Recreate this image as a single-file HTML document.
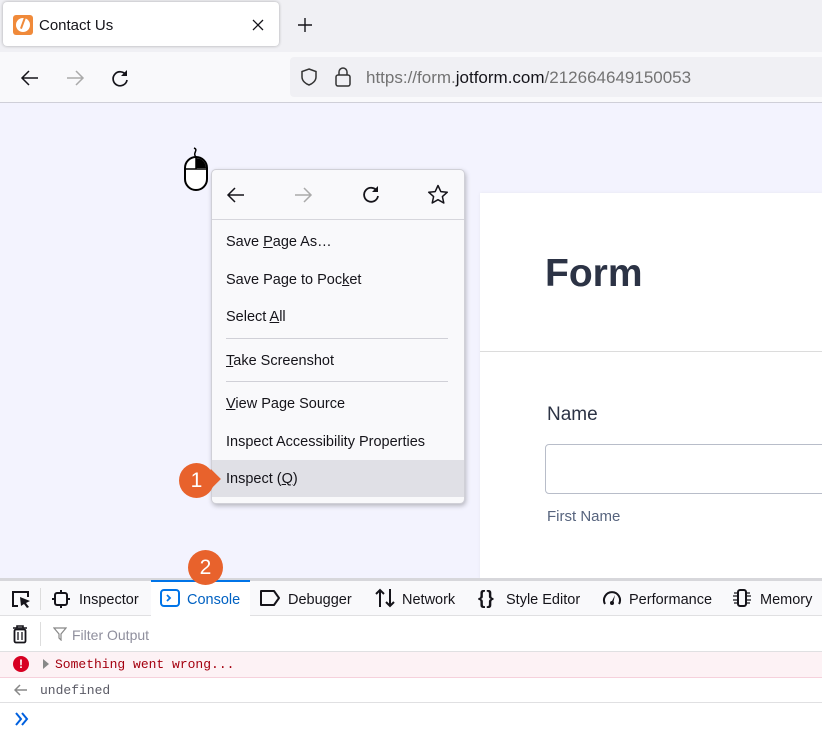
<!DOCTYPE html>
<html><head><meta charset="utf-8"><style>
*{box-sizing:border-box;margin:0;padding:0}
body{width:822px;height:748px;overflow:hidden;font-family:"Liberation Sans",sans-serif;background:#fff;position:relative;color:#15141a}
.a{position:absolute}
.t{position:absolute;white-space:nowrap}
.mi{position:absolute;left:226px;font-size:14.5px;color:#15141a;white-space:nowrap}
.tab{position:absolute;top:583px;height:35px;font-size:14.5px;color:#15141a;white-space:nowrap;line-height:35px}
</style></head><body>
<div class="a" style="left:0;top:0;width:822px;height:52px;background:#f0f0f4"></div>
<div class="a" style="left:3px;top:2px;width:276px;height:44px;background:#fff;border-radius:4px;box-shadow:0 0 3px rgba(0,0,0,.3)"></div>
<div class="a" style="left:13px;top:15px;width:20px;height:20px;background:#f08a3a;border-radius:3px"></div>
<div class="a" style="left:16px;top:18px;width:14px;height:14px;background:#fff;border-radius:50%"></div>
<div class="a" style="left:22px;top:17px;width:2px;height:12px;background:#f08a3a;transform:rotate(20deg)"></div>
<div class="t" style="left:39px;top:17px;font-size:15px">Contact Us</div>
<svg class="a" style="left:252px;top:19px" width="12" height="12"><path d="M1 1L11 11M11 1L1 11" stroke="#15141a" stroke-width="1.3"/></svg>
<svg class="a" style="left:297px;top:17px" width="16" height="16"><path d="M8 1V15M1 8H15" stroke="#15141a" stroke-width="1.4"/></svg>
<div class="a" style="left:0;top:52px;width:822px;height:51px;background:#f9f9fb;border-bottom:1px solid #cfcfd8"></div>
<svg class="a" style="left:20px;top:68px" width="20" height="20"><path d="M18 10H3M9 3L2 10L9 17" stroke="#15141a" stroke-width="1.5" fill="none"/></svg>
<svg class="a" style="left:65px;top:68px" width="20" height="20"><path d="M2 10H17M11 3L18 10L11 17" stroke="#aaa" stroke-width="1.5" fill="none"/></svg>
<svg class="a" style="left:110px;top:68px" width="20" height="20"><path d="M16 7A7 7 0 1 0 17 12" stroke="#15141a" stroke-width="1.7" fill="none"/><path d="M17 2V8H11Z" fill="#15141a"/></svg>
<div class="a" style="left:290px;top:57px;width:532px;height:40px;background:#f0f0f4;border-radius:4px 0 0 4px"></div>
<svg class="a" style="left:299px;top:67px" width="20" height="20"><path d="M10 2L17 4.5V10C17 14 13 17 10 18C7 17 3 14 3 10V4.5Z" stroke="#333" stroke-width="1.5" fill="none"/></svg>
<svg class="a" style="left:334px;top:66px" width="18" height="22"><rect x="2" y="9" width="14" height="11" rx="2" stroke="#333" stroke-width="1.5" fill="none"/><path d="M5 9V6A4 4 0 0 1 13 6V9" stroke="#333" stroke-width="1.5" fill="none"/></svg>
<div class="t" style="left:366px;top:68px;font-size:17px;color:#737373">https://form.<span style="color:#15141a">jotform.com</span>/212664649150053</div>
<div class="a" style="left:0;top:103px;width:822px;height:476px;background:#f3f3fe"></div>
<div class="a" style="left:480px;top:193px;width:342px;height:386px;background:#fff;box-shadow:0 0 3px rgba(0,0,0,.06)"></div>
<div class="a" style="left:480px;top:351px;width:342px;height:1px;background:#dcdcdc"></div>
<div class="t" style="left:545px;top:252px;font-size:39px;font-weight:bold;color:#2c3345">Form</div>
<div class="t" style="left:547px;top:404px;font-size:19px;color:#2c3345">Name</div>
<div class="a" style="left:545px;top:444px;width:290px;height:50px;border:1px solid #b8bdc9;border-radius:4px"></div>
<div class="t" style="left:547px;top:508px;font-size:15px;color:#57647e">First Name</div>
<svg class="a" style="left:183px;top:147px" width="28" height="46"><path d="M11 1C16 3 9 6 13 10" stroke="#000" stroke-width="1.5" fill="none"/><rect x="2" y="10" width="22" height="33" rx="11" stroke="#000" stroke-width="2" fill="#fff"/><path d="M2 22H24M13 10V22" stroke="#000" stroke-width="1.5"/><path d="M13 11A10 10 0 0 1 23 21H13Z" fill="#000"/></svg>
<div class="a" style="left:211px;top:169px;width:254px;height:335px;background:#f9f9fb;border:1px solid #d0d0d7;border-radius:5px;box-shadow:1px 2px 5px rgba(0,0,0,.25)"></div>
<div class="a" style="left:212px;top:219px;width:252px;height:1px;background:#d6d6dc"></div>
<svg class="a" style="left:226px;top:185px" width="20" height="20"><path d="M18 10H3M9 3L2 10L9 17" stroke="#15141a" stroke-width="1.5" fill="none"/></svg>
<svg class="a" style="left:293px;top:185px" width="20" height="20"><path d="M2 10H17M11 3L18 10L11 17" stroke="#aaa" stroke-width="1.5" fill="none"/></svg>
<svg class="a" style="left:361px;top:184px" width="20" height="20"><path d="M16 7A7 7 0 1 0 17 12" stroke="#15141a" stroke-width="1.8" fill="none"/><path d="M17 2V8H11Z" fill="#15141a"/></svg>
<svg class="a" style="left:427px;top:184px" width="22" height="22"><path d="M11 1.5L13.8 7.6L20.3 8.2L15.4 12.6L16.8 19L11 15.7L5.2 19L6.6 12.6L1.7 8.2L8.2 7.6Z" stroke="#15141a" stroke-width="1.5" fill="none" stroke-linejoin="round"/></svg>
<div class="mi" style="top:234px">Save <u>P</u>age As…</div>
<div class="mi" style="top:272px">Save Page to Poc<u>k</u>et</div>
<div class="mi" style="top:309px">Select <u>A</u>ll</div>
<div class="a" style="left:226px;top:338px;width:222px;height:1px;background:#d0d0d7"></div>
<div class="mi" style="top:353px"><u>T</u>ake Screenshot</div>
<div class="a" style="left:226px;top:381px;width:222px;height:1px;background:#d0d0d7"></div>
<div class="mi" style="top:396px"><u>V</u>iew Page Source</div>
<div class="mi" style="top:434px">Inspect Accessibility Properties</div>
<div class="a" style="left:212px;top:460px;width:252px;height:37px;background:#e0e0e6"></div>
<div class="mi" style="top:471px">Inspect (<u>Q</u>)</div>
<div class="a" style="left:204px;top:472px;width:14px;height:14px;background:#e8622c;transform:rotate(45deg)"></div>
<div class="a" style="left:179px;top:463px;width:35px;height:35px;border-radius:50%;background:#e8622c;color:#fff;font-size:21px;text-align:center;line-height:35px">1</div>
<div class="a" style="left:0;top:578px;width:822px;height:3px;background:#d7d7db"></div>
<div class="a" style="left:0;top:581px;width:822px;height:35px;background:#f9f9fb;border-bottom:1px solid #e0e0e2"></div>
<div class="a" style="left:151px;top:580px;width:99px;height:2px;background:#0074e8"></div>
<div class="a" style="left:151px;top:582px;width:99px;height:34px;background:#fff"></div>
<div class="a" style="left:199px;top:570px;width:12px;height:12px;background:#e8622c;transform:rotate(45deg)"></div>
<div class="a" style="left:188px;top:550px;width:35px;height:35px;border-radius:50%;background:#e8622c;color:#fff;font-size:21px;text-align:center;line-height:35px">2</div>
<svg class="a" style="left:10px;top:589px" width="22" height="20"><path d="M8 17H3V3H18V8" stroke="#15141a" stroke-width="2" fill="none"/><path d="M10 8L20 12L16 14L19 18L17 19L14 15L11 17Z" fill="#15141a"/></svg>
<div class="a" style="left:40px;top:588px;width:1px;height:22px;background:#ddd"></div>
<svg class="a" style="left:51px;top:589px" width="20" height="20"><rect x="4" y="4" width="12" height="12" rx="2" stroke="#15141a" stroke-width="2" fill="none"/><path d="M10 1V4M10 16V19M1 10H4M16 10H19" stroke="#15141a" stroke-width="2"/></svg>
<div class="tab" style="left:79px">Inspector</div>
<svg class="a" style="left:160px;top:589px" width="20" height="18"><rect x="1" y="1" width="18" height="16" rx="3" stroke="#0074e8" stroke-width="2" fill="none"/><path d="M7 6L10 9L7 12" stroke="#0074e8" stroke-width="1.8" fill="none"/></svg>
<div class="tab" style="left:187px;color:#0061c2">Console</div>
<svg class="a" style="left:259px;top:589px" width="22" height="18"><path d="M2 2H15L20 9L15 16H2Z" stroke="#15141a" stroke-width="2" fill="none" stroke-linejoin="round"/></svg>
<div class="tab" style="left:288px">Debugger</div>
<svg class="a" style="left:374px;top:588px" width="22" height="20"><path d="M6 19V2M2 6L6 2L10 6M16 1V18M12 14L16 18L20 14" stroke="#15141a" stroke-width="2" fill="none"/></svg>
<div class="tab" style="left:402px">Network</div>
<div class="tab" style="left:478px;font-weight:bold;font-size:19px;top:581px;letter-spacing:1px">{}</div>
<div class="tab" style="left:506px">Style Editor</div>
<svg class="a" style="left:602px;top:588px" width="20" height="20"><path d="M3 16A8 8 0 1 1 17 16" stroke="#15141a" stroke-width="2" fill="none"/><path d="M9 15L13 7L11 16Z" fill="#15141a"/><circle cx="10" cy="15" r="2" fill="#15141a"/></svg>
<div class="tab" style="left:629px">Performance</div>
<svg class="a" style="left:732px;top:588px" width="20" height="20"><rect x="6" y="2" width="8" height="16" rx="2" stroke="#15141a" stroke-width="2" fill="none"/><path d="M2 5H6M1 8H6M1 12H6M2 15H6M14 5H18M14 8H19M14 12H19M14 15H18" stroke="#15141a" stroke-width="1.2"/></svg>
<div class="tab" style="left:760px">Memory</div>
<div class="a" style="left:0;top:616px;width:822px;height:36px;background:#fff;border-bottom:1px solid #e0e0e2"></div>
<svg class="a" style="left:11px;top:624px" width="18" height="20"><path d="M2 4H16M6 4V2H12V4" stroke="#15141a" stroke-width="1.6" fill="none"/><rect x="3.5" y="5.5" width="11" height="13" rx="1.5" stroke="#15141a" stroke-width="1.8" fill="none"/><path d="M7 8V16M11 8V16" stroke="#15141a" stroke-width="1.3"/></svg>
<div class="a" style="left:40px;top:622px;width:1px;height:24px;background:#ddd"></div>
<svg class="a" style="left:53px;top:627px" width="14" height="14"><path d="M1 1H13L8 7V13L6 11V7Z" stroke="#888" stroke-width="1.2" fill="none"/></svg>
<div class="t" style="left:72px;top:627px;font-size:14px;color:#8f8f9d">Filter Output</div>
<div class="a" style="left:0;top:652px;width:822px;height:26px;background:#fdf2f5;border-bottom:1px solid #f6d1dc"></div>
<div class="a" style="left:13px;top:656px;width:16px;height:16px;border-radius:50%;background:#d70022;color:#fff;font-size:12px;font-weight:bold;text-align:center;line-height:16px">!</div>
<svg class="a" style="left:43px;top:659px" width="7" height="10"><path d="M0 0L6 5L0 10Z" fill="#888"/></svg>
<div class="t" style="left:55px;top:657px;font-family:'Liberation Mono',monospace;font-size:13px;color:#a4000f">Something went wrong...</div>
<div class="a" style="left:0;top:678px;width:822px;height:25px;border-bottom:1px solid #e0e0e2"></div>
<svg class="a" style="left:14px;top:684px" width="14" height="12"><path d="M13 6H2M6 1L1 6L6 11" stroke="#888" stroke-width="1.5" fill="none"/></svg>
<div class="t" style="left:40px;top:683px;font-family:'Liberation Mono',monospace;font-size:13px;color:#5b5b66">undefined</div>
<svg class="a" style="left:14px;top:712px" width="16" height="14"><path d="M2 1L7 7L2 13M8 1L13 7L8 13" stroke="#0060df" stroke-width="2" fill="none"/></svg>
</body></html>
